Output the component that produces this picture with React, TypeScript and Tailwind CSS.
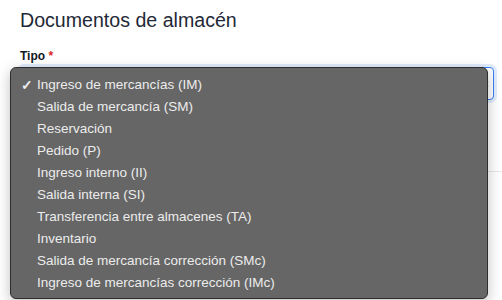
import React from 'react';

const options = [
  'Ingreso de mercancías (IM)',
  'Salida de mercancía (SM)',
  'Reservación',
  'Pedido (P)',
  'Ingreso interno (II)',
  'Salida interna (SI)',
  'Transferencia entre almacenes (TA)',
  'Inventario',
  'Salida de mercancía corrección (SMc)',
  'Ingreso de mercancías corrección (IMc)',
];

export default function App() {
  return (
    <div className="w-[502px] h-[300px] overflow-hidden bg-white font-['Liberation_Sans',Arial,sans-serif]">
      <div className="px-5 pt-[6px]">
        <h1 className="text-[19.6px] leading-[28px] text-[#1f2937]">Documentos de almacén</h1>
        <label className="block mt-[14px] text-[12px] leading-4 font-bold text-[#111827]">
          Tipo <span className="text-[#dc2626]">*</span>
        </label>
        <div className="relative mt-[3px]">
          <div className="h-[33px] w-[474px] rounded-[4px] border border-[#3b82f6] bg-white shadow-[0_0_0_3px_rgba(59,130,246,0.15)] flex items-center justify-end pr-1">
            <svg width="6" height="10" viewBox="0 0 6 10" className="text-[#333]">
              <path d="M1 3.5 L3 1.5 L5 3.5 M1 6.5 L3 8.5 L5 6.5" fill="none" stroke="currentColor" strokeWidth="1.2" />
            </svg>
          </div>
          <div className="absolute left-[-10px] top-0 w-[478px] rounded-[6px] border border-[#2e2e2e] bg-[#666666] pt-[6px] pb-[4px] shadow-[0_4px_14px_rgba(0,0,0,0.25)] z-10">
            {options.map((o, i) => (
              <div key={o} className="h-[22px] flex items-center text-[13.5px] text-[#ececec]">
                <span className="w-[26px] pl-[10px] text-[14px] font-bold">{i === 0 ? '✓' : ''}</span>
                <span>{o}</span>
              </div>
            ))}
          </div>
        </div>
      </div>
      <div className="mt-[71px] ml-5 h-px bg-[#e5e7eb]" />
    </div>
  );
}
